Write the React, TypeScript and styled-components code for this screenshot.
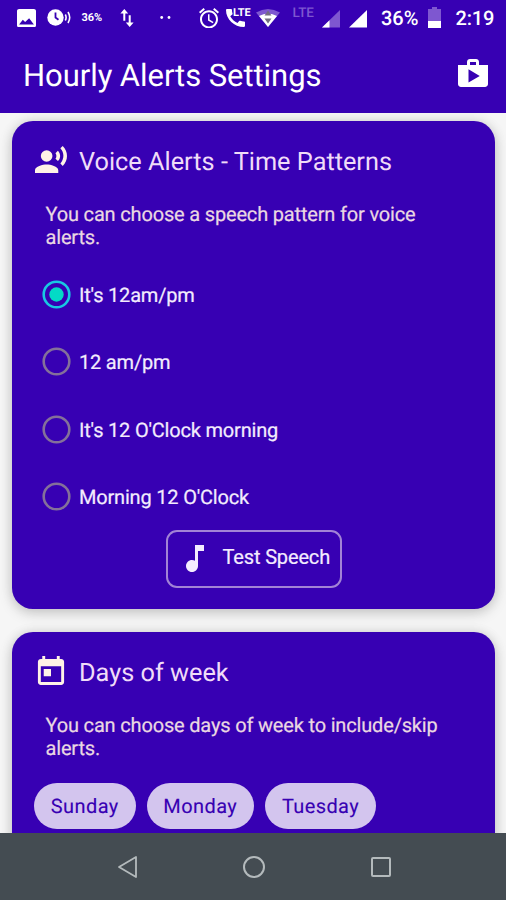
import React, { useState } from "react";
import styled, { createGlobalStyle } from "styled-components";

const GlobalStyle = createGlobalStyle`
  * { box-sizing: border-box; }
  body { margin: 0; font-family: Roboto, "Liberation Sans", sans-serif; text-rendering: geometricPrecision; }
`;

const indigo = "#3700b3";

const Screen = styled.div`
  width: 506px;
  height: 900px;
  display: flex;
  flex-direction: column;
  overflow: hidden;
  background: #f6f6f6;
`;

const Header = styled.header`
  flex: none;
  height: 113px;
  background: ${indigo};
  color: #fff;
`;

const StatusBar = styled.div`
  height: 36px;
  display: flex;
  align-items: flex-start;
`;

const Slot = styled.div<{ $gap: number; $top: number; $width: number }>`
  position: relative;
  flex: none;
  width: ${(p) => p.$width}px;
  margin-left: ${(p) => p.$gap}px;
  margin-top: ${(p) => p.$top}px;
  svg { display: block; }
`;

const StatusText = styled.span<{ $size: number; $weight?: number; $dim?: boolean; $spacing?: number }>`
  display: block;
  white-space: nowrap;
  font-size: ${(p) => p.$size}px;
  line-height: 1;
  font-weight: ${(p) => p.$weight ?? 500};
  letter-spacing: ${(p) => p.$spacing ?? 0}px;
  color: ${(p) => (p.$dim ? "#7e57d0" : "#fff")};
`;

const NetworkBadge = styled(StatusText)`
  position: absolute;
  left: 7.5px;
  top: -2px;
`;

const AppBar = styled.div`
  height: 77px;
  display: flex;
  align-items: center;
  justify-content: space-between;
  padding: 0 18px 0 23px;
  svg { display: block; margin-top: -3px; }
`;

const AppTitle = styled.h1`
  margin: 2px 0 0;
  font-size: 31px;
  line-height: 36px;
  font-weight: 400;
  letter-spacing: -0.06px;
`;

const Content = styled.main`
  flex: 1;
  min-height: 0;
  overflow: hidden;
  padding: 8px 11px 0 12px;
  display: flex;
  flex-direction: column;
  gap: 23px;
`;

const Card = styled.section<{ $height: number }>`
  flex: none;
  height: ${(p) => p.$height}px;
  border-radius: 21px;
  background: ${indigo};
  box-shadow: 0 4px 14px rgba(0, 0, 0, 0.17), 0 0 12px rgba(0, 0, 0, 0.1);
`;

const CardHeader = styled.div`
  height: 82px;
  display: flex;
  align-items: center;
  color: #fff2e6;
`;

const CardIcon = styled.div`
  width: 67px;
  padding-left: 23px;
  margin-top: -5px;
  svg { display: block; }
`;

const CardTitle = styled.h2`
  margin: 1px 0 0;
  font-size: 25.3px;
  line-height: 30px;
  font-weight: 400;
  color: #f0dcf8;
`;

const Description = styled.p`
  margin: 0 50px 0 33.5px;
  font-size: 20px;
  line-height: 23px;
  letter-spacing: -0.17px;
  color: #ead8e2;
  -webkit-text-stroke: 0.2px #ead8e2;
`;

const RadioList = styled.div`
  margin-top: 12px;
  display: flex;
  flex-direction: column;
`;

const RadioRow = styled.div`
  height: 67.5px;
  display: flex;
  align-items: center;
  padding-left: 30px;
  gap: 8px;
  font-size: 20px;
  letter-spacing: -0.19px;
  color: #f3ecfd;
  -webkit-text-stroke: 0.2px #f3ecfd;
  cursor: pointer;
`;

const Ring = styled.svg`
  flex: none;
  margin-top: -1px;
`;

const SpeechButton = styled.button`
  display: flex;
  align-items: center;
  width: 176px;
  height: 58px;
  margin: -1px 0 0 153.5px;
  padding: 0 0 0 18px;
  border: 2px solid #a283d6;
  border-radius: 11px;
  background: transparent;
  color: #f4ecff;
  font: 400 20px Roboto, sans-serif;
  letter-spacing: -0.15px;
  -webkit-text-stroke: 0.2px #f4ecff;
  white-space: nowrap;
  svg { margin: -1px 19px 0 0; flex: none; }
  span { margin-top: -5px; }
`;

const Chips = styled.div`
  display: flex;
  gap: 11px;
  margin: 23px 0 0 22px;
`;

const Chip = styled.span<{ $width: number }>`
  width: ${(p) => p.$width}px;
  height: 45.5px;
  border-radius: 23px;
  background: #d3c5ee;
  color: ${indigo};
  display: flex;
  align-items: center;
  justify-content: center;
  font-size: 20px;
  letter-spacing: 0.4px;
  -webkit-text-stroke: 0.1px ${indigo};
`;

const NavBar = styled.nav`
  flex: none;
  height: 67px;
  background: #444c52;
  display: flex;
  justify-content: center;
  align-items: center;
  gap: 104px;
  padding-left: 1px;
  svg { display: block; }
`;

type IconProps = { d: string; box: string; w: number; h: number };
const Icon = ({ d, box, w, h }: IconProps) => (
  <svg width={w} height={h} viewBox={box} fill="currentColor" fillRule="evenodd" preserveAspectRatio="none">
    <path d={d} />
  </svg>
);

const paths = {
  image:
    "M21 19V5c0-1.1-.9-2-2-2H5c-1.1 0-2 .9-2 2v14c0 1.1.9 2 2 2h14c1.1 0 2-.9 2-2zM5 18l3.5-4.5 2.2 2.1L14.5 12l4.5 6z",
  alarm:
    "M22 5.72l-4.6-3.86-1.29 1.53 4.6 3.86L22 5.72zM7.88 3.39L6.6 1.86 2 5.71l1.29 1.53 4.59-3.85zM12.5 8H11v6l4.75 2.85.75-1.23-4-2.37V8zM12 4c-4.97 0-9 4.03-9 9s4.02 9 9 9c4.97 0 9-4.03 9-9s-4.03-9-9-9zm0 16c-3.87 0-7-3.13-7-7s3.13-7 7-7 7 3.13 7 7-3.13 7-7 7z",
  call: "M20.01 15.38c-1.23 0-2.42-.2-3.53-.56-.35-.12-.74-.03-1.01.24l-1.57 1.97c-2.83-1.35-5.48-3.9-6.89-6.83l1.95-1.66c.27-.28.35-.67.24-1.02-.37-1.11-.56-2.3-.56-3.53 0-.54-.45-.99-.99-.99H4.19C3.65 3 3 3.24 3 3.99 3 13.28 10.73 21 20.01 21c.71 0 .99-.63.99-1.18v-3.45c0-.54-.45-.99-.99-.99z",
  shop: "M16 6V4c0-1.11-.89-2-2-2h-4c-1.11 0-2 .89-2 2v2H2v13c0 1.11.89 2 2 2h16c1.11 0 2-.89 2-2V6h-6zm-6-2h4v2h-4V4zM9 18V9l7.5 4.5L9 18z",
  voice:
    "M9 5a4 4 0 1 0 0 8a4 4 0 1 0 0-8zM9 15c-2.67 0-8 1.34-8 4v2h16v-2c0-2.66-5.33-4-8-4zm7.76-9.64l-1.68 1.69c.84 1.18.84 2.71 0 3.89l1.68 1.69c2.02-2.02 2.02-5.07 0-7.27zM20.07 2l-1.63 1.63c2.77 3.02 2.77 7.56 0 10.74L20.07 16c3.9-3.89 3.91-9.95 0-14z",
  note: "M12 3v10.55c-.59-.34-1.27-.55-2-.55-2.21 0-4 1.79-4 4s1.79 4 4 4 4-1.79 4-4V7h4V3h-6z",
  today:
    "M19 3h-1V1h-2v2H8V1H6v2H5c-1.11 0-1.99.9-1.99 2L3 19c0 1.1.89 2 2 2h14c1.1 0 2-.9 2-2V5c0-1.1-.9-2-2-2zm0 16H5V8h14v11zM7 10h5v5H7z",
};

const patterns = ["It's 12am/pm", "12 am/pm", "It's 12 O'Clock morning", "Morning 12 O'Clock"];
const days = [
  { name: "Sunday", width: 101.5 },
  { name: "Monday", width: 107.5 },
  { name: "Tuesday", width: 111 },
];

const Status = () => (
  <StatusBar>
    <Slot $gap={16.5} $top={8.5} $width={19}>
      <Icon d={paths.image} box="3 3 18 18" w={19} h={18.5} />
    </Slot>
    <Slot $gap={11.5} $top={9} $width={25}>
      <svg width="25" height="17" fill="none">
        <circle cx="8.5" cy="8.5" r="8.2" fill="#fff" />
        <path d="M8.5 3.5v5l3 2.2" stroke={indigo} strokeWidth="1.8" />
        <path d="M18.3 5.5q1.6 3 0 6M21 3q3.4 5.5 0 11" stroke="#fff" strokeWidth="1.6" />
      </svg>
    </Slot>
    <Slot $gap={9.5} $top={12} $width={21}>
      <StatusText $size={11} $weight={700} $spacing={-0.1}>36%</StatusText>
    </Slot>
    <Slot $gap={17.5} $top={8.5} $width={14}>
      <svg width="14" height="18" fill="#fff">
        <path d="M4.3 0L8.2 4.5H5.3v7.3H3.3V4.5H.4zM9.7 18l3.9-4.5h-2.9V6.3h-2v7.2H5.8z" />
      </svg>
    </Slot>
    <Slot $gap={26} $top={16} $width={11}>
      <svg width="11" height="3" fill="#fff">
        <circle cx="1.7" cy="1.5" r="1.4" />
        <circle cx="9" cy="1.5" r="1.4" />
      </svg>
    </Slot>
    <Slot $gap={28} $top={7.5} $width={20}>
      <Icon d={paths.alarm} box="2 1.8 20 20.2" w={20} h={20.5} />
    </Slot>
    <Slot $gap={6.5} $top={9} $width={19}>
      <Icon d={paths.call} box="3 3 18 18" w={19} h={18} />
      <NetworkBadge $size={11} $weight={700}>LTE</NetworkBadge>
    </Slot>
    <Slot $gap={11.5} $top={9} $width={24}>
      <svg width="24" height="18">
        <path d="M0 3.5Q12-3.5 24 3.5L12 18z" fill="#7e57d0" />
        <path d="M3 7Q12 2 21 7L12 18z" fill="#fff" />
        <path d="M12 1.5l3.5 5h-7zM12 14.5l-3.5-5h7z" fill="#746c82" />
      </svg>
    </Slot>
    <Slot $gap={12.5} $top={7} $width={23}>
      <StatusText $size={13.5} $dim>LTE</StatusText>
    </Slot>
    <Slot $gap={6.5} $top={9.5} $width={18}>
      <svg width="18" height="18">
        <path d="M18 0v17.5H0z" fill="#7e57d0" />
        <path d="M7.5 10.2v7.3H0z" fill="#fff" />
      </svg>
    </Slot>
    <Slot $gap={8.5} $top={9.5} $width={18}>
      <svg width="18" height="18">
        <path d="M18 0v17.5H0z" fill="#fff" />
      </svg>
    </Slot>
    <Slot $gap={14.5} $top={8} $width={38}>
      <StatusText $size={20}>36%</StatusText>
    </Slot>
    <Slot $gap={9} $top={7} $width={13}>
      <svg width="13" height="21">
        <path d="M4 0h5v2h4v12H0V2h4z" fill="#7e57d0" />
        <path d="M0 14h13v7H0z" fill="#fff" />
      </svg>
    </Slot>
    <Slot $gap={14.5} $top={8} $width={40}>
      <StatusText $size={20} $spacing={-0.2}>2:19</StatusText>
    </Slot>
  </StatusBar>
);

export default function App() {
  const [selected, setSelected] = useState(0);
  return (
    <>
      <GlobalStyle />
      <Screen>
        <Header>
          <Status />
          <AppBar>
            <AppTitle>Hourly Alerts Settings</AppTitle>
            <Icon d={paths.shop} box="2 2 20 19" w={30} h={28} />
          </AppBar>
        </Header>
        <Content>
          <Card $height={488}>
            <CardHeader>
              <CardIcon>
                <Icon d={paths.voice} box="1 2 22 19" w={32} h={27} />
              </CardIcon>
              <CardTitle>Voice Alerts - Time Patterns</CardTitle>
            </CardHeader>
            <Description>You can choose a speech pattern for voice alerts.</Description>
            <RadioList role="radiogroup">
              {patterns.map((label, i) => (
                <RadioRow key={label} role="radio" aria-checked={i === selected} onClick={() => setSelected(i)}>
                  <Ring width="29" height="29">
                    <circle
                      cx="14.5"
                      cy="14.5"
                      r="12.8"
                      fill="none"
                      stroke={i === selected ? "#18c8e2" : "#84709a"}
                      strokeWidth="2.6"
                    />
                    {i === selected && <circle cx="14.5" cy="14.5" r="7.2" fill="#03dac6" />}
                  </Ring>
                  {label}
                </RadioRow>
              ))}
            </RadioList>
            <SpeechButton>
              <Icon d={paths.note} box="6 3 12 18" w={18} h={27} />
              <span>Test Speech</span>
            </SpeechButton>
          </Card>
          <Card $height={260}>
            <CardHeader>
              <CardIcon>
                <Icon d={paths.today} box="1 1 22 20" w={32} h={29} />
              </CardIcon>
              <CardTitle>Days of week</CardTitle>
            </CardHeader>
            <Description>You can choose days of week to include/skip alerts.</Description>
            <Chips>
              {days.map((day) => (
                <Chip key={day.name} $width={day.width}>{day.name}</Chip>
              ))}
            </Chips>
          </Card>
        </Content>
        <NavBar>
          <svg width="22" height="24" fill="none" stroke="#b4babc" strokeWidth="1.8" strokeLinejoin="round">
            <path d="M20 2v20L3 12z" />
          </svg>
          <svg width="24" height="24" fill="none" stroke="#b4babc" strokeWidth="2">
            <circle cx="12" cy="12" r="10" />
          </svg>
          <svg width="22" height="22" fill="none" stroke="#b4babc" strokeWidth="2">
            <rect x="2" y="2" width="18" height="18" rx="1" />
          </svg>
        </NavBar>
      </Screen>
    </>
  );
}
